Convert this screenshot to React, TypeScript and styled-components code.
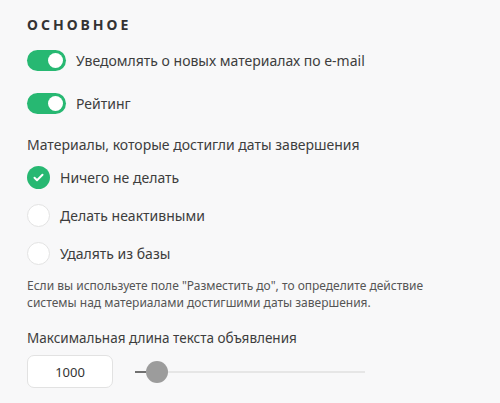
import styled, { createGlobalStyle } from "styled-components";

const GlobalStyle = createGlobalStyle`
  body {
    margin: 0;
    background: #f8f8f9;
    font-family: "Noto Sans", "Open Sans", sans-serif;
    color: #3a3a3a;
  }
`;

const Page = styled.section`
  padding: 16px 27px 0;
  width: 500px;
  height: 403px;
  box-sizing: border-box;
  overflow: hidden;
`;

const Heading = styled.h2`
  margin: 0 0 15px;
  font-size: 14px;
  font-weight: 700;
  letter-spacing: 3px;
  color: #333;
  line-height: 18px;
`;

const ToggleRow = styled.label`
  display: flex;
  align-items: center;
  gap: 10px;
  height: 22px;
  margin-bottom: 21px;
  font-size: 14px;
  color: #3d3d3d;
`;

const Track = styled.span<{ $on: boolean }>`
  position: relative;
  width: 39px;
  height: 21px;
  border-radius: 11px;
  background: ${(p) => (p.$on ? "#27b872" : "#d6d6d6")};
  flex-shrink: 0;

  &::after {
    content: "";
    position: absolute;
    top: 3px;
    left: ${(p) => (p.$on ? "21px" : "3px")};
    width: 15px;
    height: 15px;
    border-radius: 50%;
    background: #fff;
  }
`;

const GroupLabel = styled.p<{ $size: number; $gap: number }>`
  margin: 0 0 ${(p) => p.$gap}px;
  font-size: ${(p) => p.$size}px;
  color: #3d3d3d;
  line-height: 20px;
`;

const RadioList = styled.div`
  display: flex;
  flex-direction: column;
  gap: 15px;
  margin-bottom: 13px;
`;

const RadioRow = styled.label`
  display: flex;
  align-items: center;
  gap: 10px;
  height: 23px;
  font-size: 14px;
  color: #3d3d3d;
`;

const RadioMark = styled.span<{ $checked: boolean }>`
  width: 23px;
  height: 23px;
  box-sizing: border-box;
  border-radius: 50%;
  flex-shrink: 0;
  display: flex;
  align-items: center;
  justify-content: center;
  background: ${(p) => (p.$checked ? "#27b872" : "#fff")};
  border: ${(p) => (p.$checked ? "none" : "1.5px solid #e3e3e3")};
`;

const Hint = styled.p`
  margin: 0 0 17px;
  font-size: 12px;
  line-height: 16.5px;
  color: #555;
`;

const RangeRow = styled.div`
  display: flex;
  align-items: center;
  gap: 22px;
`;

const NumberBox = styled.div`
  width: 86px;
  height: 33px;
  box-sizing: border-box;
  border: 1px solid #e2e2e2;
  border-radius: 7px;
  background: #fff;
  display: flex;
  align-items: center;
  justify-content: center;
  font-size: 13px;
  color: #333;
`;

const Slider = styled.div`
  position: relative;
  width: 230px;
  height: 22px;
  display: flex;
  align-items: center;
`;

const Rail = styled.div`
  flex: 1;
  height: 2px;
  background: #e6e6e6;
`;

const Fill = styled.div`
  position: absolute;
  left: 0;
  top: 10px;
  height: 2px;
  background: #707070;
`;

const Thumb = styled.div`
  position: absolute;
  top: 0;
  width: 22px;
  height: 22px;
  border-radius: 50%;
  background: #9c9c9c;
`;

const toggles = [
  { label: "Уведомлять о новых материалах по e-mail", on: true },
  { label: "Рейтинг", on: true },
];

const options = [
  { label: "Ничего не делать", checked: true },
  { label: "Делать неактивными", checked: false },
  { label: "Удалять из базы", checked: false },
];

export default function App() {
  const thumbLeft = 11;
  return (
    <>
      <GlobalStyle />
      <Page>
        <Heading>ОСНОВНОЕ</Heading>
        {toggles.map((t) => (
          <ToggleRow key={t.label}>
            <Track $on={t.on} />
            {t.label}
          </ToggleRow>
        ))}
        <GroupLabel $size={14} $gap={11}>
          Материалы, которые достигли даты завершения
        </GroupLabel>
        <RadioList>
          {options.map((o) => (
            <RadioRow key={o.label}>
              <RadioMark $checked={o.checked}>
                {o.checked && (
                  <svg width="11" height="9" viewBox="0 0 11 9">
                    <path
                      d="M1.5 4.8 L4 7.2 L9.5 1.8"
                      fill="none"
                      stroke="#fff"
                      strokeWidth="2"
                      strokeLinecap="round"
                      strokeLinejoin="round"
                    />
                  </svg>
                )}
              </RadioMark>
              {o.label}
            </RadioRow>
          ))}
        </RadioList>
        <Hint>
          Если вы используете поле "Разместить до", то определите действие
          <br />
          системы над материалами достигшими даты завершения.
        </Hint>
        <GroupLabel $size={13.5} $gap={7}>
          Максимальная длина текста объявления
        </GroupLabel>
        <RangeRow>
          <NumberBox>1000</NumberBox>
          <Slider>
            <Rail />
            <Fill style={{ width: thumbLeft }} />
            <Thumb style={{ left: thumbLeft }} />
          </Slider>
        </RangeRow>
      </Page>
    </>
  );
}
